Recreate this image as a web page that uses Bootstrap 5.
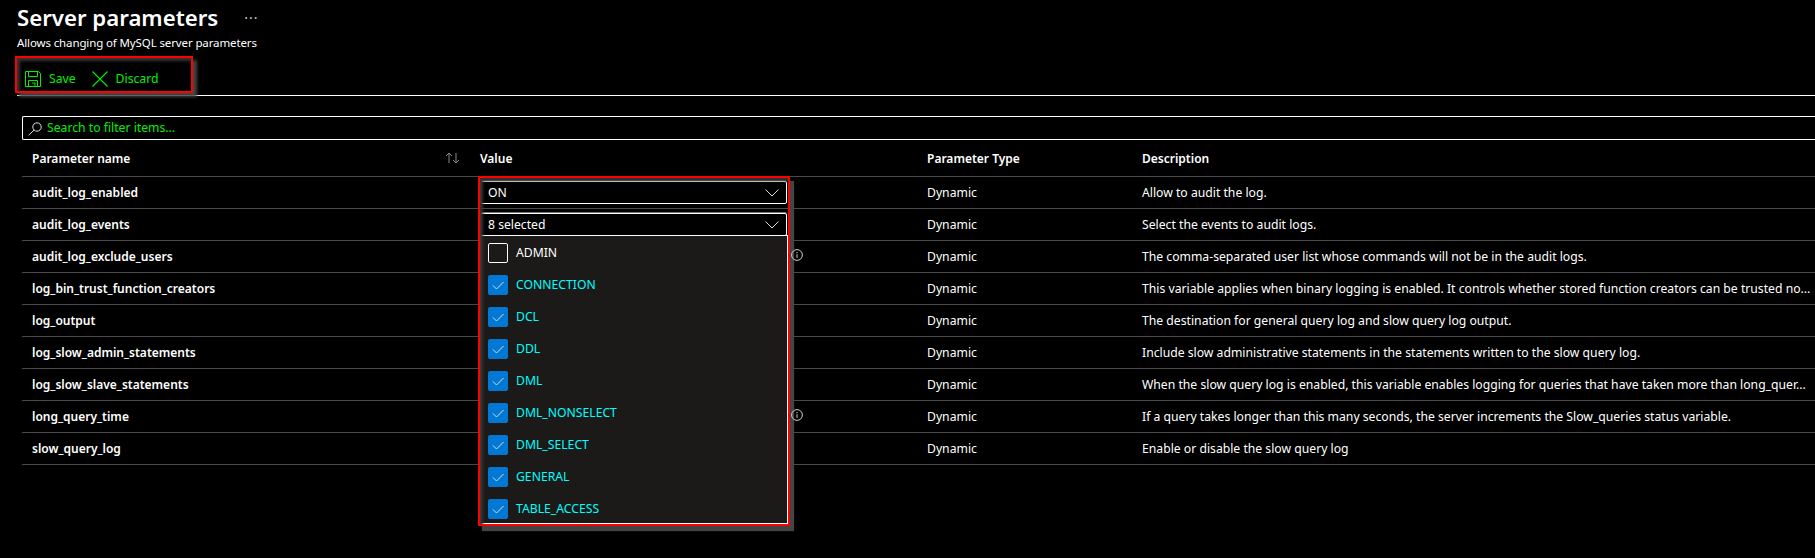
<!DOCTYPE html>
<html lang="en">
<head>
  <meta charset="UTF-8">
  <title>Server parameters</title>
  <link rel="stylesheet" href="https://cdn.jsdelivr.net/npm/bootstrap@5.3.3/dist/css/bootstrap.min.css">
  <style>
    body {
      background: #000;
      color: #fff;
      font-family: "Noto Sans", "Open Sans", sans-serif;
      font-size: 12.2px;
      height: 558px;
      overflow: hidden;
    }
    .page-wrap { position: relative; height: 558px; overflow: hidden; }
    .title-row { padding: 3px 0 0 17px; height: 32px; }
    .page-title { font-size: 22.2px; font-weight: 600; line-height: 30px; margin: 0; }
    .title-dots { margin-left: 26px; color: #ccc; font-size: 14px; line-height: 30px; letter-spacing: 1px; }
    .page-sub { padding: 2px 0 0 17px; height: 24px; font-size: 11.5px; line-height: 18px; letter-spacing: -.12px; }
    .tool-bar { margin-left: 17px; height: 40px; border-bottom: 1px solid #fff; padding: 7px 0 0 8px; color: #00f000; }
    .tool-item { font-size: 12.2px; }
    .tool-item svg { display: block; }
    .search-box {
      margin: 20px 0 0 22px;
      height: 24px;
      border: 1px solid #fff;
      border-right: 0;
      border-radius: 2px 0 0 2px;
      padding: 1px 0 0 5px;
      color: #00f000;
    }
    .search-box svg { margin-right: 1px; }
    .param-table { margin: 0 0 0 22px; width: 1793px; table-layout: fixed; --bs-table-bg: transparent; --bs-table-color: #fff; }
    .param-table th, .param-table td {
      padding: 1px 10px 0;
      height: 32px;
      vertical-align: middle;
      white-space: nowrap;
      font-size: 12.2px;
      line-height: 16px;
      border-bottom: 1px solid #4a4a4a;
      box-shadow: none;
    }
    .param-table th { height: 36px; padding-top: 2px; font-size: 12px; font-weight: 600; }
    .param-table td:first-child { font-size: 12px; font-weight: 600; }
    .sort-arrows { position: absolute; left: 444px; top: 151px; }
    .value-select {
      width: 307px;
      height: 23px;
      border: 1px solid #fff;
      border-radius: 2px;
      padding: 0 7px;
      box-shadow: 0 -1px 0 #777;
    }
    .info-mark { position: absolute; left: 791px; width: 12px; height: 12px; z-index: 4; }
    .audit-menu {
      position: absolute;
      left: 480px;
      top: 235px;
      width: 308px;
      height: 289px;
      background: #1b1a19;
      border: 1px solid #fff;
      padding-top: 1px;
      z-index: 2;
    }
    .menu-line { height: 32px; padding-left: 7px; color: #00ffff; font-size: 12.2px; }
    .menu-line.is-plain { color: #fff; }
    .tick-box { width: 20px; height: 20px; margin-right: 8px; background: #0078d4; border-radius: 2px; flex: none; }
    .is-plain .tick-box { background: transparent; border: 1px solid #fff; }
    .red-frame {
      position: absolute;
      border: 2px solid #f00;
      pointer-events: none;
      z-index: 3;
    }
    .frame-tools { left: 15px; top: 56px; width: 178px; height: 37px; box-shadow: 4px 4px 3px #444, inset 3px 3px 3px #333; }
    .frame-values { left: 478px; top: 176px; width: 312px; height: 350px; box-shadow: 4px 5px 1px #444, inset 3px 3px 3px #333; }
  </style>
</head>
<body>
<div class="page-wrap">
  <div class="title-row d-flex align-items-center">
    <h1 class="page-title">Server parameters</h1>
    <span class="title-dots">···</span>
  </div>
  <div class="page-sub">Allows changing of MySQL server parameters</div>

  <div class="tool-bar d-flex align-items-center gap-3">
    <div class="tool-item d-flex align-items-center gap-2">
      <svg width="16" height="16" viewBox="0 0 16 16" fill="none" stroke="#00f000"><path d="M.5.5h13l2 2v13H.5z"/><path d="M3.5.5v5h9v-5M3.5 15.5v-6h9v6M7 12h3v3.5"/></svg>
      <span>Save</span>
    </div>
    <div class="tool-item d-flex align-items-center gap-2">
      <svg width="16" height="16" viewBox="0 0 16 16" fill="none" stroke="#00f000" stroke-width="1.1"><path d="M.5.5l15 15M15.5.5l-15 15"/></svg>
      <span>Discard</span>
    </div>
  </div>

  <div class="search-box d-flex align-items-center gap-1">
    <svg width="14" height="14" viewBox="0 0 14 14" fill="none" stroke="#ddd"><circle cx="9" cy="5" r="4.2"/><path d="M6 8L.7 13.3"/></svg>
    <span>Search to filter items...</span>
  </div>

  <table class="table param-table">
    <colgroup>
      <col style="width:448px"><col style="width:447px"><col style="width:215px"><col>
    </colgroup>
    <thead>
      <tr><th>Parameter name</th><th>Value</th><th>Parameter Type</th><th>Description</th></tr>
    </thead>
    <tbody>
      <tr>
        <td>audit_log_enabled</td>
        <td><div class="value-select d-flex align-items-center justify-content-between"><span>ON</span><svg width="14" height="8" viewBox="0 0 14 8" fill="none" stroke="#ddd"><path d="M.5.5L7 7 13.5.5"/></svg></div></td>
        <td>Dynamic</td><td>Allow to audit the log.</td>
      </tr>
      <tr>
        <td>audit_log_events</td>
        <td><div class="value-select d-flex align-items-center justify-content-between"><span>8 selected</span><svg width="14" height="8" viewBox="0 0 14 8" fill="none" stroke="#ddd"><path d="M.5.5L7 7 13.5.5"/></svg></div></td>
        <td>Dynamic</td><td>Select the events to audit logs.</td>
      </tr>
      <tr><td>audit_log_exclude_users</td><td></td><td>Dynamic</td><td>The comma-separated user list whose commands will not be in the audit logs.</td></tr>
      <tr><td>log_bin_trust_function_creators</td><td></td><td>Dynamic</td><td>This variable applies when binary logging is enabled. It controls whether stored function creators can be trusted no...</td></tr>
      <tr><td>log_output</td><td></td><td>Dynamic</td><td>The destination for general query log and slow query log output.</td></tr>
      <tr><td>log_slow_admin_statements</td><td></td><td>Dynamic</td><td>Include slow administrative statements in the statements written to the slow query log.</td></tr>
      <tr><td>log_slow_slave_statements</td><td></td><td>Dynamic</td><td>When the slow query log is enabled, this variable enables logging for queries that have taken more than long_quer...</td></tr>
      <tr><td>long_query_time</td><td></td><td>Dynamic</td><td>If a query takes longer than this many seconds, the server increments the Slow_queries status variable.</td></tr>
      <tr><td>slow_query_log</td><td></td><td>Dynamic</td><td>Enable or disable the slow query log</td></tr>
    </tbody>
  </table>

  <svg class="sort-arrows" width="18" height="14" viewBox="0 0 18 14" fill="none" stroke="#888"><path d="M5 12V2M2 5l3-3 3 3M12 2v10M9 9l3 3 3-3"/></svg>
  <svg class="info-mark" style="top:249px" viewBox="0 0 12 12" fill="none" stroke="#ccc"><circle cx="6" cy="6" r="5.4"/><path d="M6 5.2v3.6M6 3v1.2"/></svg>
  <svg class="info-mark" style="top:409px" viewBox="0 0 12 12" fill="none" stroke="#ccc"><circle cx="6" cy="6" r="5.4"/><path d="M6 5.2v3.6M6 3v1.2"/></svg>

  <div class="audit-menu" id="auditMenu"></div>
  <div class="red-frame frame-tools"></div>
  <div class="red-frame frame-values"></div>
</div>

<script src="https://cdn.jsdelivr.net/npm/bootstrap@5.3.3/dist/js/bootstrap.bundle.min.js"></script>
<script>
  const auditEvents = ['ADMIN', 'CONNECTION', 'DCL', 'DDL', 'DML', 'DML_NONSELECT', 'DML_SELECT', 'GENERAL', 'TABLE_ACCESS'];
  const tick = '<svg width="20" height="20" viewBox="0 0 20 20" fill="none" stroke="#cfe4f7"><path d="M5 10.5l3.5 3.5L15.5 7"/></svg>';
  document.getElementById('auditMenu').innerHTML = auditEvents.map((name, i) =>
    `<div class="menu-line d-flex align-items-center ${i === 0 ? 'is-plain' : ''}">
       <span class="tick-box">${i === 0 ? '' : tick}</span><span>${name}</span>
     </div>`).join('');
</script>
</body>
</html>
